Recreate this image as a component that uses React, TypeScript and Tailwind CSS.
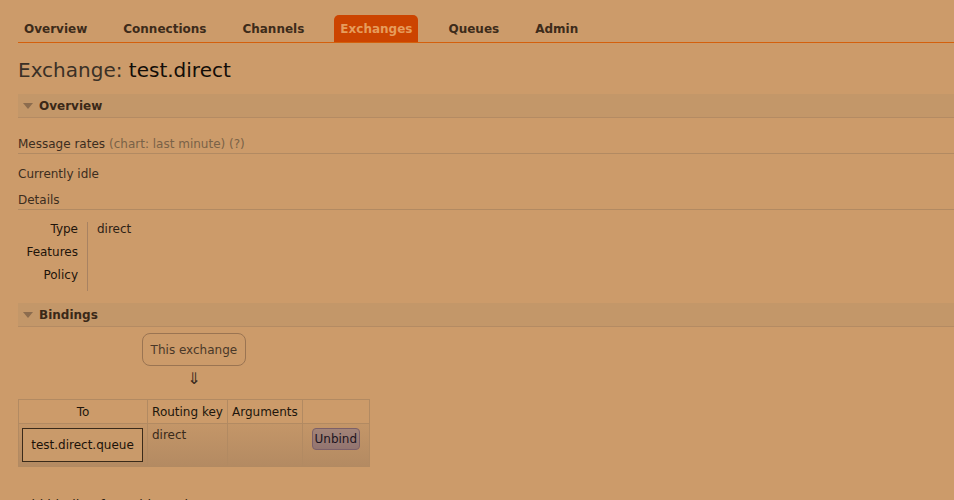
import React from "react";

const tabs = ["Overview", "Connections", "Channels", "Exchanges", "Queues", "Admin"];

function Triangle() {
  return (
    <svg width="10" height="6" viewBox="0 0 10 6" className="shrink-0">
      <path d="M0 0 L10 0 L5 6 Z" fill="#8c6c4e" />
    </svg>
  );
}

function SectionHeader({ title }: { title: string }) {
  return (
    <div className="flex h-[24px] items-center gap-[6px] border-b border-[#b48b63] bg-[#c39769] pl-[5px] text-[12px] font-bold text-[#3a2818]">
      <Triangle />
      <span>{title}</span>
    </div>
  );
}

export default function App() {
  const details: [string, string][] = [
    ["Type", "direct"],
    ["Features", ""],
    ["Policy", ""],
  ];

  return (
    <div
      className="min-h-screen overflow-hidden bg-[#cc9b6a] pl-[18px] text-[12px] text-[#3c2d1e]"
      style={{ fontFamily: "'DejaVu Sans', Verdana, sans-serif" }}
    >
      {/* menu */}
      <ul className="flex gap-[24px] border-b border-[#d4600c] pt-[15px]">
        {tabs.map((t) => (
          <li
            key={t}
            className={
              t === "Exchanges"
                ? "flex h-[27px] items-center rounded-t-[5px] bg-[#cc4400] px-[6px] font-bold text-[#e69c5c]"
                : "flex h-[27px] items-center px-[6px] font-bold text-[#3d2b1a]"
            }
          >
            {t}
          </li>
        ))}
      </ul>

      <h1 className="mt-[15px] text-[20px] leading-[24px] text-[#3a3026]">
        Exchange: <span className="text-[#120d08]">test.direct</span>
      </h1>

      <div className="mt-[12px]">
        <SectionHeader title="Overview" />
      </div>

      <div className="mt-[16px] flex h-[20px] items-center border-b border-[#b28a62]">
        Message rates <span className="ml-[4px] text-[#7a6247]">(chart: last minute) (?)</span>
      </div>

      <div className="mt-[10px] leading-[20px]">Currently idle</div>

      <div className="mt-[5px] flex h-[21px] items-center border-b border-[#b28a62] pt-[2px]">Details</div>

      <div className="mt-[12px] grid w-fit grid-cols-[70px_auto]">
        <div className="border-r border-[#a88262]">
          {details.map(([k]) => (
            <div key={k} className="h-[23px] pr-[9px] text-right leading-[14px] text-[#1e140a]">
              {k}
            </div>
          ))}
        </div>
        <div>
          {details.map(([k, v]) => (
            <div key={k} className="h-[23px] pl-[9px] leading-[14px] text-[#2e2216]">
              {v}
            </div>
          ))}
        </div>
      </div>

      <div className="mt-[12px]">
        <SectionHeader title="Bindings" />
      </div>

      <div className="mt-[6px] flex w-fit flex-col items-center">
        <div className="flex h-[33px] w-[104px] items-center justify-center rounded-[8px] border border-[#9a7452] text-[#4a3828]">
          This exchange
        </div>
        <div className="mt-[2px] text-[16px] leading-[22px] text-[#3a2c1e]">⇓</div>

        <table className="mt-[9px] border-collapse border border-[#b28a62]">
          <thead>
            <tr className="h-[24px]">
              <th className="w-[129px] border border-[#b28a62] px-[4px] text-center font-normal text-[#20160c]">To</th>
              <th className="w-[80px] border border-[#b28a62] px-[4px] text-center font-normal text-[#20160c]">Routing key</th>
              <th className="w-[74px] border border-[#b28a62] px-[4px] text-center font-normal text-[#20160c]">Arguments</th>
              <th className="w-[67px] border border-[#b28a62] px-[4px]"></th>
            </tr>
          </thead>
          <tbody>
            <tr className="h-[42px] bg-gradient-to-b from-[#c49668] to-[#b38a62]">
              <td className="border border-[#b28a62] px-[3px] py-[4px] align-top">
                <div className="flex h-[34px] w-[121px] items-center justify-center border border-[#3a2a1a] bg-[#c99a6a] text-[#1c1209]">
                  test.direct.queue
                </div>
              </td>
              <td className="border border-[#b28a62] px-[4px] pt-[4px] align-top leading-[14px] text-[#3a2a1a]">direct</td>
              <td className="border border-[#b28a62]"></td>
              <td className="border border-[#b28a62] pt-[4px] text-center align-top">
                <button className="h-[22px] rounded-[4px] border border-[#7c6068] bg-gradient-to-b from-[#a38478] to-[#927470] px-[2px] text-[12px] text-[#1c1420]">
                  Unbind
                </button>
              </td>
            </tr>
          </tbody>
        </table>
      </div>

      <div className="mt-[30px] text-[13px] leading-[16px] text-[#2a1e12]">Add binding from this exchange</div>
    </div>
  );
}
